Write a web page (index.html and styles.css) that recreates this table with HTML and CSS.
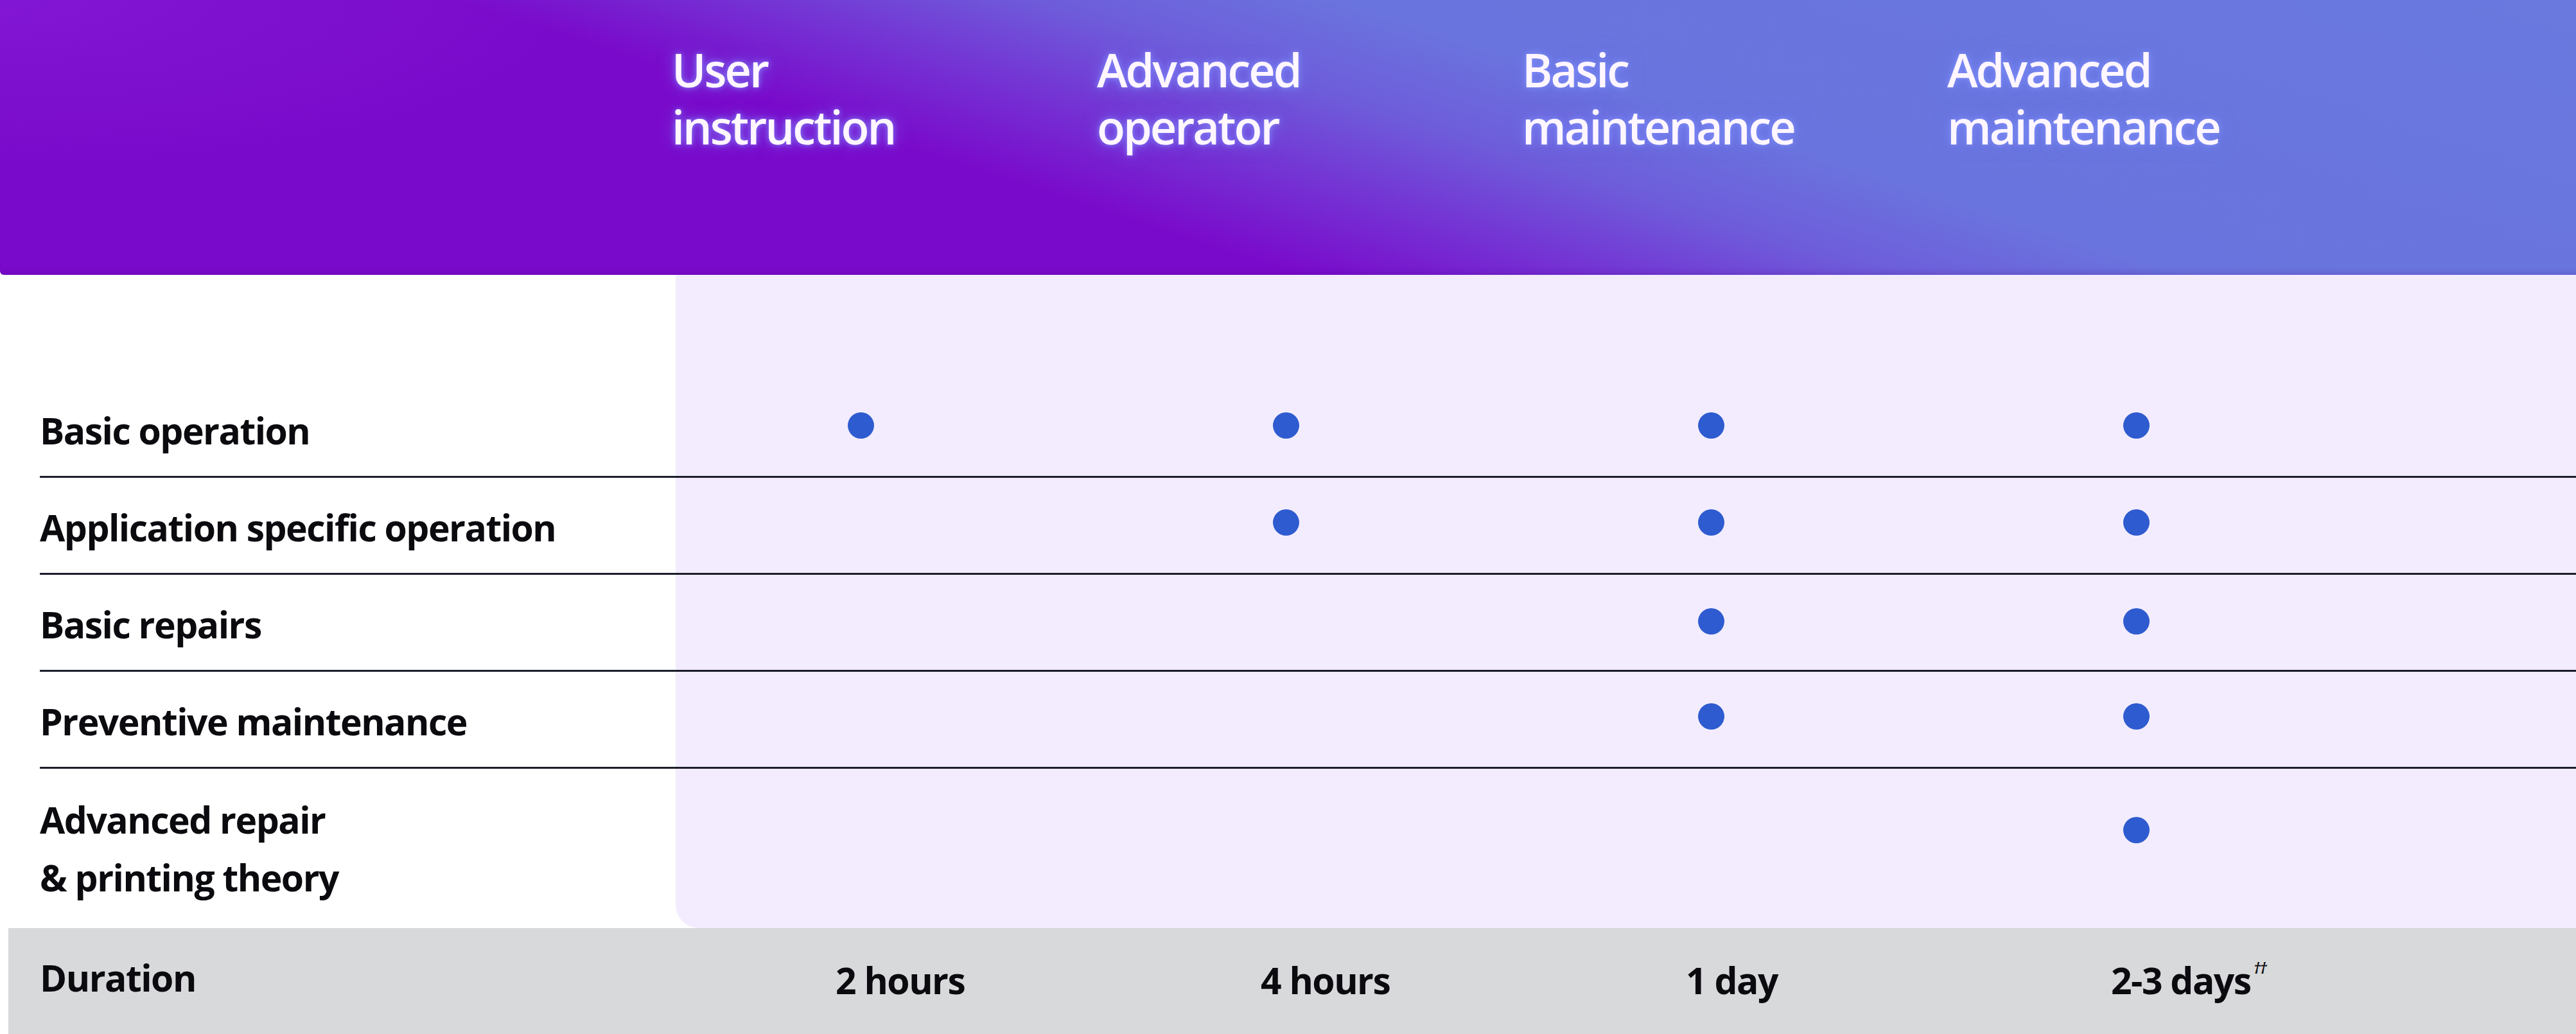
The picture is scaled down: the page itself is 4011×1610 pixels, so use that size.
FILE: index.html
```html
<!DOCTYPE html>
<html lang="en">
<head>
<meta charset="utf-8">
<title>Training levels</title>
<link rel="stylesheet" href="styles.css">
</head>
<body>
<div class="page">
  <header class="head">
    <div class="head-blank"></div>
    <div class="head-col">User<br>instruction</div>
    <div class="head-col">Advanced<br>operator</div>
    <div class="head-col">Basic<br>maintenance</div>
    <div class="head-col">Advanced<br>maintenance</div>
  </header>

  <section class="matrix">
    <div class="panel"></div>
    <div class="row r1">
      <div class="label">Basic operation</div>
      <div class="cell"><span class="dot"></span></div>
      <div class="cell"><span class="dot"></span></div>
      <div class="cell"><span class="dot"></span></div>
      <div class="cell"><span class="dot"></span></div>
    </div>
    <div class="row r2">
      <div class="label">Application specific operation</div>
      <div class="cell"></div>
      <div class="cell"><span class="dot"></span></div>
      <div class="cell"><span class="dot"></span></div>
      <div class="cell"><span class="dot"></span></div>
    </div>
    <div class="row r3">
      <div class="label">Basic repairs</div>
      <div class="cell"></div>
      <div class="cell"></div>
      <div class="cell"><span class="dot"></span></div>
      <div class="cell"><span class="dot"></span></div>
    </div>
    <div class="row r4">
      <div class="label">Preventive maintenance</div>
      <div class="cell"></div>
      <div class="cell"></div>
      <div class="cell"><span class="dot"></span></div>
      <div class="cell"><span class="dot"></span></div>
    </div>
    <div class="row r5 last">
      <div class="label">Advanced repair<br>&amp; printing theory</div>
      <div class="cell"></div>
      <div class="cell"></div>
      <div class="cell"></div>
      <div class="cell"><span class="dot"></span></div>
    </div>
  </section>

  <footer class="duration">
    <div class="dur-label">Duration</div>
    <div class="dur-val">2 hours</div>
    <div class="dur-val">4 hours</div>
    <div class="dur-val">1 day</div>
    <div class="dur-val">2-3 days<sup class="mark">††</sup></div>
  </footer>
</div>
</body>
</html>
```
FILE: styles.css
```css
html, body {
  margin: 0;
  padding: 0;
  background: #ffffff;
}

body {
  font-family: "Open Sans", "Liberation Sans", sans-serif;
  color: #0b0b0f;
  width: 4011px;
  overflow: hidden;
}

.page {
  width: 4011px;
}

/* ---------- header ---------- */
.head {
  display: grid;
  grid-template-columns: 1046px repeat(4, 662px) 1fr;
  height: 428px;
  box-sizing: border-box;
  padding-top: 64px;
  border-bottom-left-radius: 6px;
  background:
    radial-gradient(ellipse 900px 260px at 0% 0%, rgba(140, 40, 225, 0.4), rgba(140, 40, 225, 0) 100%),
    linear-gradient(18deg, #7a0acb 0%, #7a0acb 38%, #7434d4 47%, #6e5cda 55%, #6a74de 64%, #6979de 100%);
  box-shadow: inset 0 -12px 10px -8px rgba(60, 0, 120, 0.18);
}

.head-col {
  font-size: 72px;
  font-weight: 600;
  line-height: 89px;
  letter-spacing: -3px;
  color: #fff6ff;
  text-shadow:
    0 0 10px rgba(135, 150, 255, 0.85),
    0 0 26px rgba(120, 135, 255, 0.65);
}

/* ---------- matrix ---------- */
.matrix {
  display: grid;
  grid-template-columns: 1052px 1fr;
  grid-template-rows: 165px repeat(4, 151px) 248px;
}

.panel {
  grid-column: 2;
  grid-row: 1 / -1;
  background: #f2ecfe;
  border-bottom-left-radius: 36px;
}

.row {
  grid-column: 1 / -1;
  margin-left: 62px;
  display: grid;
  grid-template-columns: 984px repeat(4, 662px) 1fr;
  align-items: center;
  box-sizing: border-box;
  border-bottom: 3px solid #1b1d2a;
}

.r1 { grid-row: 2; }
.r2 { grid-row: 3; }
.r3 { grid-row: 4; }
.r4 { grid-row: 5; }
.r5 { grid-row: 6; border-bottom: none; }

.label {
  font-size: 57px;
  font-weight: 700;
  line-height: 90px;
  letter-spacing: -1.5px;
  padding-top: 5px;
  color: #0b0b0f;
}

.r5 .label { padding-top: 0; }

.cell {
  display: flex;
  align-items: center;
}

.dot {
  display: block;
  width: 41px;
  height: 41px;
  margin-left: 274px;
  margin-bottom: 10px;
  border-radius: 50%;
  background: #2e5bcf;
}

.r3 .dot { margin-bottom: 4px; }

.r5 .cell {
  align-self: start;
  padding-top: 75px;
}
.r5 .dot { margin-bottom: 0; }

/* ---------- duration ---------- */
.duration {
  margin-left: 13px;
  height: 165px;
  box-sizing: border-box;
  padding-bottom: 12px;
  background: #d8d9da;
  display: grid;
  grid-template-columns: 1033px repeat(4, 662px) 1fr;
  align-items: center;
}

.dur-label {
  padding-left: 49px;
  font-size: 57px;
  font-weight: 700;
  letter-spacing: -1.5px;
}

.dur-val {
  padding-left: 255px;
  padding-top: 8px;
  font-size: 57px;
  font-weight: 700;
  letter-spacing: -1.5px;
}

.mark {
  font-size: 24px;
  font-weight: 600;
  font-style: italic;
  letter-spacing: -2px;
  vertical-align: 32px;
  line-height: 0;
  margin-left: 4px;
}
```
